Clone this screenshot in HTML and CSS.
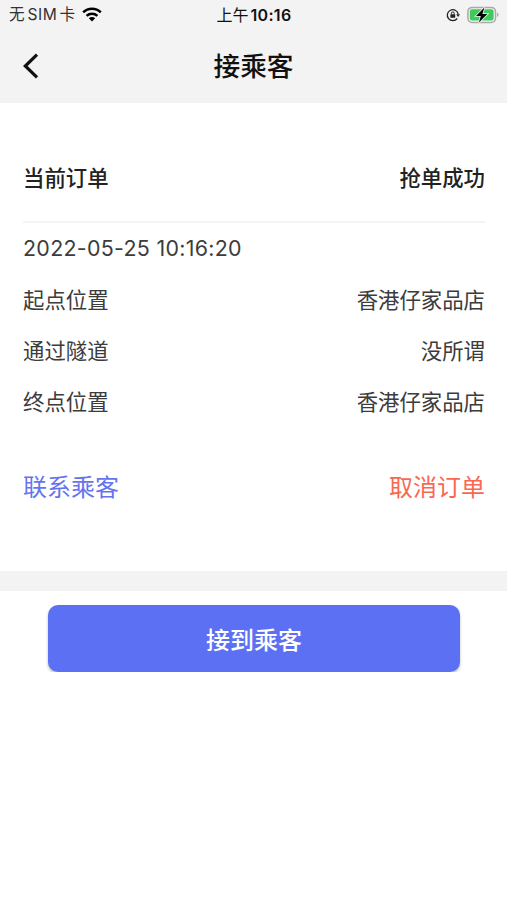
FILE: index.html
```html
<!DOCTYPE html>
<html lang="zh-CN">
<head>
<meta charset="utf-8">
<title>接乘客</title>
<link rel="stylesheet" href="styles.css">
</head>
<body>
<header class="header">
  <div class="status">
    <div class="carrier"><span class="carrier-text">无<span class="sim">SIM</span>卡</span>
      <svg class="wifi" viewBox="0 0 20 15"><path d="m10 14.5-3.2-3.2a4.6 4.6 0 0 1 6.4 0Z" fill="#000"/><path d="M4.6 8.9a7.9 7.9 0 0 1 10.8 0M1.2 5.4a12.6 12.6 0 0 1 17.6 0" fill="none" stroke="#000" stroke-width="2.6"/></svg>
    </div>
    <div class="time"><span class="ampm">上午</span>10:16</div>
    <div class="indicators">
      <svg class="lock" viewBox="0 0 14 14"><path d="M11.2 10.5A5.5 5.5 0 1 1 12.2 6" fill="none" stroke="#222" stroke-width="1.3"/><path d="M10.2 6.2H14l-1.9 2.8Z" fill="#222"/><rect x="4.4" y="6.3" width="4.8" height="3.5" rx=".4" fill="#222"/><path d="M5.4 6.5V5.3a1.4 1.4 0 0 1 2.8 0v1.2" fill="none" stroke="#222"/></svg>
      <svg class="battery" viewBox="0 0 32 18"><rect x=".9" y="1.4" width="27.6" height="15" rx="4.2" fill="none" stroke="#aaa" stroke-width="1.5"/><rect x="2.8" y="3.3" width="23.8" height="11.2" rx="2.3" fill="#3ccb5c"/><path d="M30 6.5v4.6q1.6-.7 1.6-2.3T30 6.5Z" fill="#aaa"/><path d="M17.4 1.6 9 10h4.8l-1.9 6.4L20.4 8h-5Z" fill="#000" stroke="#f3f3f3" stroke-width="1.6" paint-order="stroke"/></svg>
    </div>
  </div>
  <div class="nav">
    <button class="back" aria-label="返回"><svg viewBox="0 0 18 28"><path d="M15 2.6 3.3 14 15 25.4" fill="none" stroke="#111" stroke-width="3.2"/></svg></button>
    <h1>接乘客</h1>
  </div>
</header>
<main>
  <section class="order">
    <div class="heading"><h2>当前订单</h2><strong>抢单成功</strong></div>
    <div class="details">
      <div class="row date">2022-05-25 10:16:20</div>
      <div class="row"><span>起点位置</span><span>香港仔家品店</span></div>
      <div class="row"><span>通过隧道</span><span>没所谓</span></div>
      <div class="row"><span>终点位置</span><span>香港仔家品店</span></div>
    </div>
    <div class="actions"><a class="contact">联系乘客</a><a class="cancel">取消订单</a></div>
  </section>
  <div class="pickup"><button class="primary">接到乘客</button></div>
</main>
</body>
</html>
```

FILE: styles.css
```css
* { box-sizing: border-box; }
body { margin: 0; background: #fff; color: #3c3c3c; font-family: Inter, "Noto Sans CJK SC", sans-serif; }
button { border: 0; font-family: inherit; padding: 0; }
.header { height: 103px; background: #f3f3f3; color: #111; }
.status { height: 29px; display: grid; grid-template-columns: 1fr auto 1fr; align-items: center; padding: 0 8px 0 9px; font-size: 16px; line-height: 24px; }
.carrier { display: flex; align-items: center; gap: 7px; color: #333; }
.carrier-text { font-size: 15.6px; padding-top: 1px; }
.sim { letter-spacing: .5px; margin: 0 2px 0 3px; }
.wifi { width: 20px; height: 15px; }
.time { font-weight: 600; letter-spacing: .3px; }
.ampm { font-weight: 400; margin-right: 2px; letter-spacing: 0; }
.indicators { display: flex; justify-content: flex-end; align-items: center; gap: 7px; }
.lock { width: 14px; height: 14px; }
.battery { width: 32px; height: 18px; }
.nav { height: 73px; display: grid; grid-template-columns: 60px 1fr 60px; align-items: center; }
.back { width: 18px; height: 28px; margin-left: 22px; background: none; }
.back svg { display: block; width: 18px; height: 28px; }
.nav h1 { margin: 0; text-align: center; font-size: 26.7px; font-weight: 500; line-height: 38px; }
.order { height: 488px; padding: 54px 22px 0 23px; border-bottom: 20px solid #f3f3f3; }
.heading { height: 66px; padding-top: 5px; display: flex; justify-content: space-between; border-bottom: 2px solid #f4f4f4; font-size: 21.4px; line-height: 32px; color: #222; }
.heading h2, .heading strong { margin: 0; font-size: inherit; font-weight: 500; }
.details { margin-top: -1px; }
.row { height: 51.1px; display: flex; align-items: center; justify-content: space-between; font-size: 21.4px; }
.date { letter-spacing: .3px; }
.actions { display: flex; justify-content: space-between; margin-top: 44px; font-size: 24px; line-height: 36px; }
.contact { color: #6474f0; }
.cancel { color: #fa6751; }
.pickup { padding: 14px 47px 0 48px; }
.primary { display: block; width: 100%; height: 67px; border-radius: 10px; background: #5b70f3; color: #fff; font-size: 24px; font-weight: 500; box-shadow: 0 2px 3px #0004; }
```
